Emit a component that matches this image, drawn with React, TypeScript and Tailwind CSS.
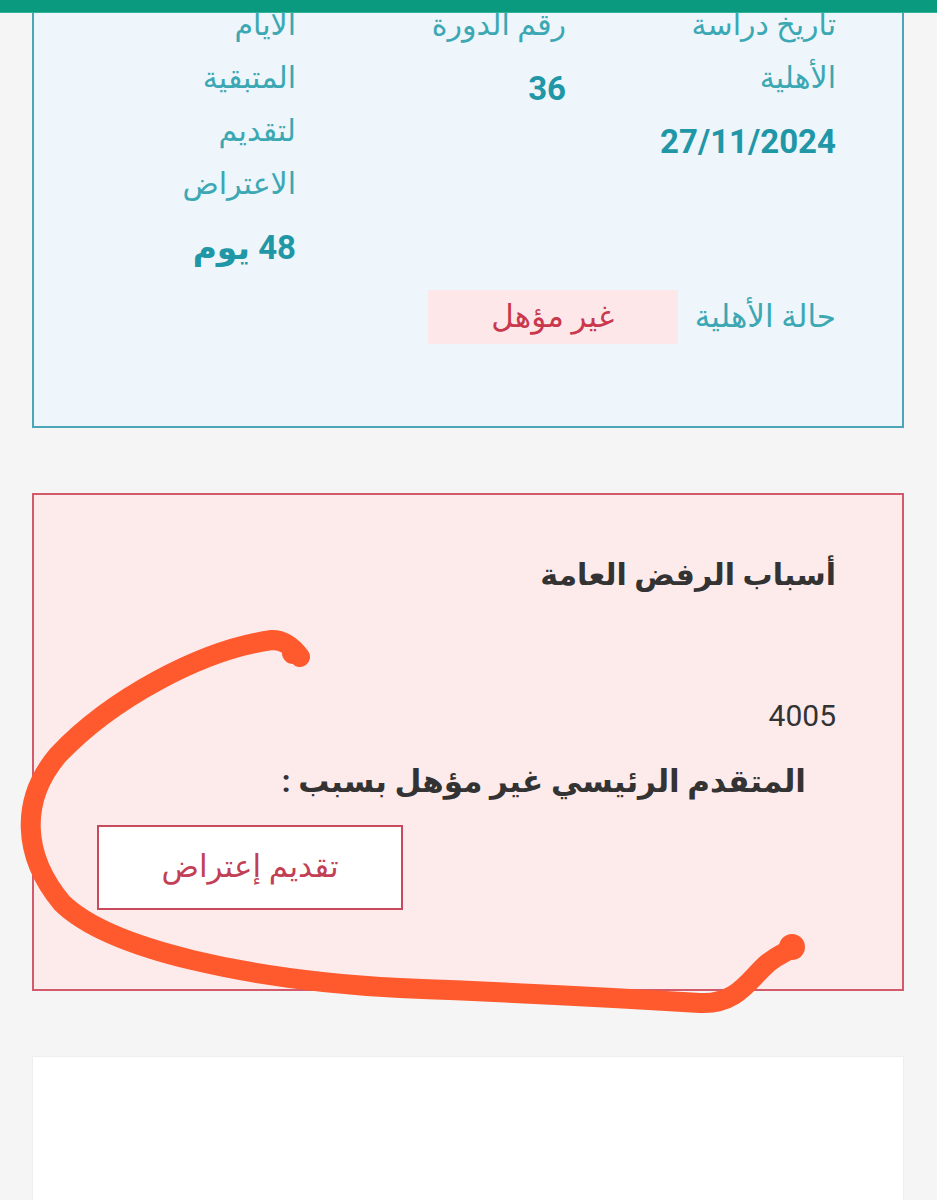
import React from "react";

const font = { fontFamily: 'Roboto, "DejaVu Sans", sans-serif' };

const columns = [
  { label: ["تاريخ دراسة", "الأهلية"], value: "27/11/2024" },
  { label: ["رقم الدورة"], value: "36" },
  { label: ["الايام", "المتبقية", "لتقديم", "الاعتراض"], value: "48 يوم" },
];

export default function App() {
  return (
    <div dir="rtl" className="relative min-h-[1200px] w-full overflow-hidden bg-[#f5f5f6]" style={font}>
      {/* top app bar */}
      <div className="relative z-10 h-[13px] bg-[#0a9a80] border-b border-[#2fb296]"></div>

      <div className="mx-[32px] mr-[33px] flex flex-col gap-[65px]">
        {/* eligibility details */}
        <section className="border-x-2 border-b-2 border-[#4ba7b7] bg-[#eef5fb] pr-[66px] pb-[82px]">
          <div className="-mt-[15px] flex">
            {columns.map((col) => (
              <div key={col.value} className="w-[270px] shrink-0">
                <div className="max-w-[170px] text-[30px] leading-[53px] text-[#3ba8b3]">
                  {col.label.map((line) => (
                    <div key={line}>{line}</div>
                  ))}
                </div>
                <div className="mt-[18px] text-[33px] leading-[40px] font-bold text-[#1f97a6]">{col.value}</div>
              </div>
            ))}
          </div>

          <div className="mt-[22px] flex items-center gap-[17px]">
            <span className="text-[31px] text-[#3ba8b3]">حالة الأهلية</span>
            <span className="flex h-[54px] w-[250px] items-center justify-center bg-[#fde7e9] text-[31px] text-[#c9384c]">
              غير مؤهل
            </span>
          </div>
        </section>

        {/* rejection reasons */}
        <section className="border-2 border-[#d35a6b] bg-[#fdebec] pr-[66px] pt-[60px] pb-[79px]">
          <h2 className="text-[30px] leading-[40px] font-bold text-[#333]">أسباب الرفض العامة</h2>
          <div className="mt-[101px] text-[30px] leading-[40px] text-[#333]">4005</div>
          <div className="mt-[26px] mr-[30px] text-[31px] leading-[40px] font-bold text-[#333]">
            المتقدم الرئيسي غير مؤهل بسبب :
          </div>
          <button className="mt-[23px] ml-[63px] mr-auto flex h-[85px] w-[306px] items-center justify-center border-2 border-[#c94a5c] bg-white text-[31px] text-[#c23f55]">
            تقديم إعتراض
          </button>
        </section>

        {/* next card */}
        <section className="h-[200px] border border-[#eeeeee] bg-white"></section>
      </div>

      {/* hand-drawn annotation */}
      <svg className="pointer-events-none absolute left-0 top-0" width="937" height="1200" viewBox="0 0 937 1200">
        <path
          d="M300 657 C292 646 284 640 272 640 C200 650 110 700 58 755 C20 800 22 855 62 903 C110 950 250 980 400 988 C500 992 620 998 700 1003 C738 1005 750 978 768 963 C782 952 792 950 794 946"
          fill="none"
          stroke="#fe5a2e"
          strokeWidth="20"
          strokeLinecap="round"
          strokeLinejoin="round"
        />
        <circle cx="293" cy="653" r="11" fill="#fe5a2e" />
        <circle cx="792" cy="947" r="13" fill="#fe5a2e" />
      </svg>
    </div>
  );
}
